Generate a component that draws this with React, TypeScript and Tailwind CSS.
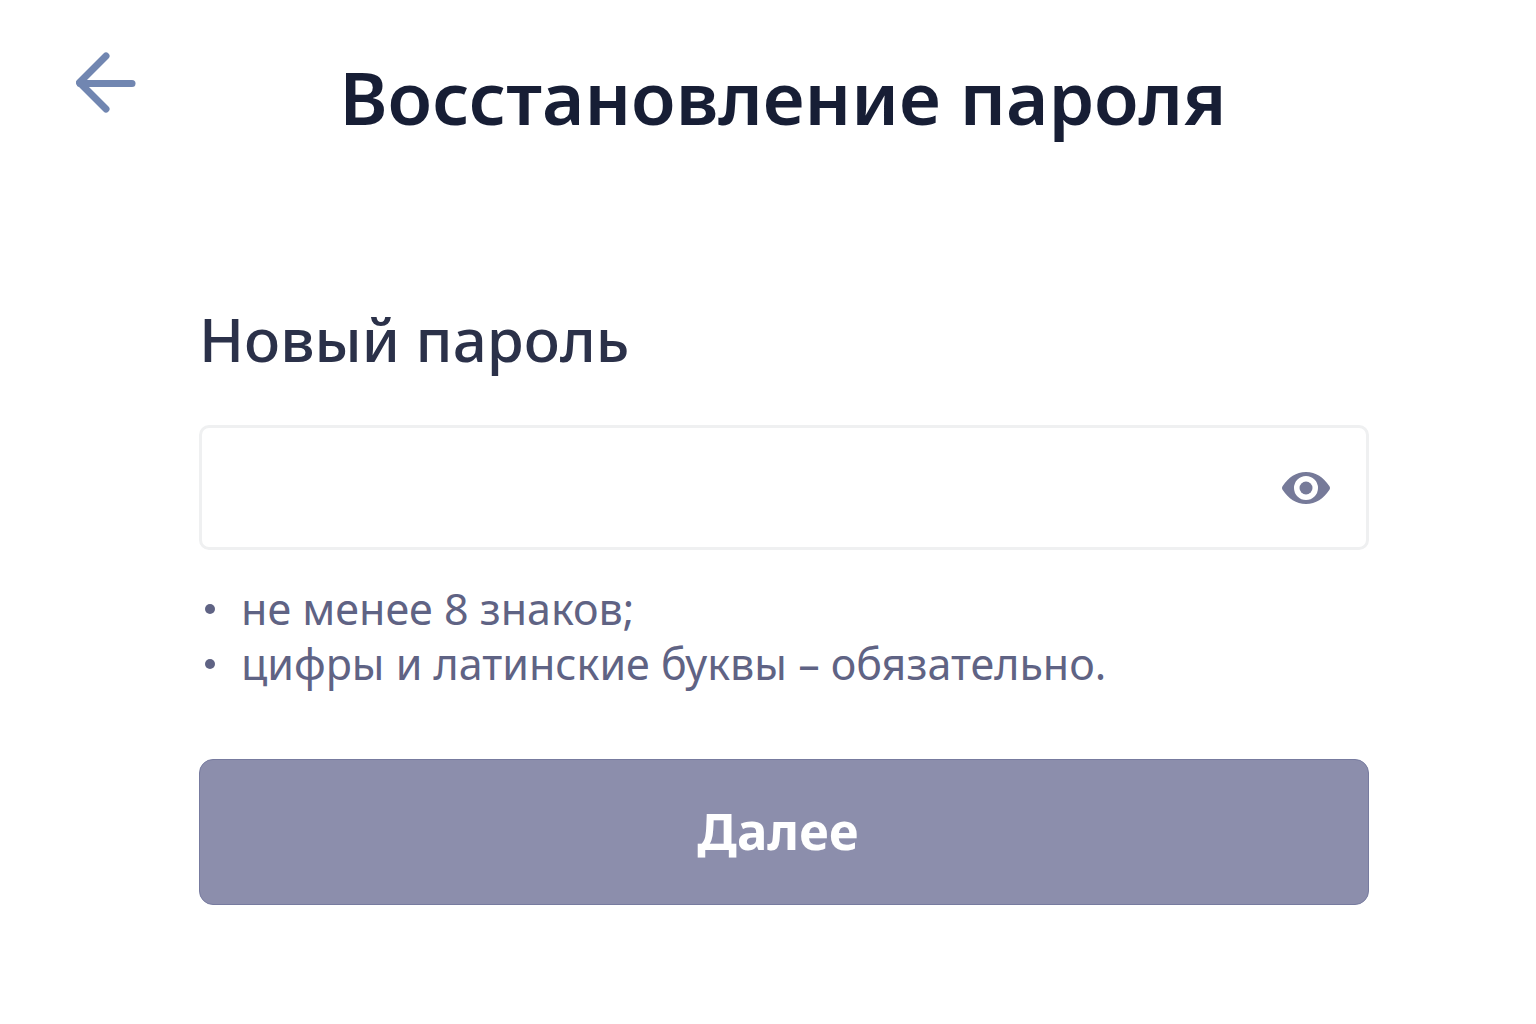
import { useState } from "react";

const requirements = [
  "не менее 8 знаков;",
  "цифры и латинские буквы – обязательно.",
];

function BackIcon() {
  return (
    <svg
      viewBox="0 0 60 62"
      className="h-[62px] w-[60px]"
      fill="none"
      stroke="currentColor"
      strokeWidth="7"
      strokeLinecap="round"
      strokeLinejoin="round"
      aria-hidden="true"
    >
      <path d="M30 4 3.500 30.500 30 57" />
      <path d="M4 31.500h52" />
    </svg>
  );
}

function EyeIcon() {
  return (
    <svg
      viewBox="0 0 48 32"
      className="h-8 w-12"
      fill="currentColor"
      aria-hidden="true"
    >
      <path
        fillRule="evenodd"
        d="M24 0C14 0 6.500 5.500.7 14a3.500 3.500 0 0 0 0 4C6.500 26.500 14 32 24 32s17.500-5.500 23.300-14a3.500 3.500 0 0 0 0-4C41.500 5.500 34 0 24 0Zm0 4a12 12 0 1 1 0 24 12 12 0 0 1 0-24Z"
      />
      <circle cx="24" cy="16" r="6.500" />
    </svg>
  );
}

export default function App() {
  const [password, setPassword] = useState("");
  const [visible, setVisible] = useState(false);

  return (
    <div className="min-h-screen bg-white font-['Noto_Sans','Open_Sans',sans-serif]">
      <header className="flex items-start pt-[52px] pr-[106px] pl-[76px]">
        <button type="button" aria-label="Назад" className="text-[#7186b1]">
          <BackIcon />
        </button>
        <h1 className="flex-1 text-center text-[73px] leading-[90px] font-semibold text-[#171e35]">
          Восстановление пароля
        </h1>
      </header>

      <form
        className="mt-[158px] pr-[167px] pl-[199px]"
        onSubmit={(e) => e.preventDefault()}
      >
        <label
          htmlFor="password"
          className="block text-[60px] leading-[78px] font-medium text-[#2b3149]"
        >
          Новый пароль
        </label>

        <div className="mt-[47px] flex h-[125px] items-center rounded-[10px] border-3 border-[#eff0f1] pr-9">
          <input
            id="password"
            type={visible ? "text" : "password"}
            value={password}
            onChange={(e) => setPassword(e.target.value)}
            className="h-full flex-1 px-8 text-[43px] text-[#2b3149] outline-none"
          />
          <button
            type="button"
            aria-label="Показать пароль"
            onClick={() => setVisible(!visible)}
            className="text-[#767a99]"
          >
            <EyeIcon />
          </button>
        </div>

        <ul className="mt-[31px] text-[43px] leading-[55px] text-[#5f6384]">
          {requirements.map((item) => (
            <li key={item} className="flex items-center gap-[26px] pl-1.5">
              <span className="size-[10px] rounded-full bg-current" />
              {item}
            </li>
          ))}
        </ul>

        <button
          type="submit"
          className="mt-[68px] h-[146px] w-full rounded-[14px] border border-[#777b9f] bg-[#8c8eac] pr-3 pb-1 text-[51px] font-bold text-white"
        >
          Далее
        </button>
      </form>
    </div>
  );
}
